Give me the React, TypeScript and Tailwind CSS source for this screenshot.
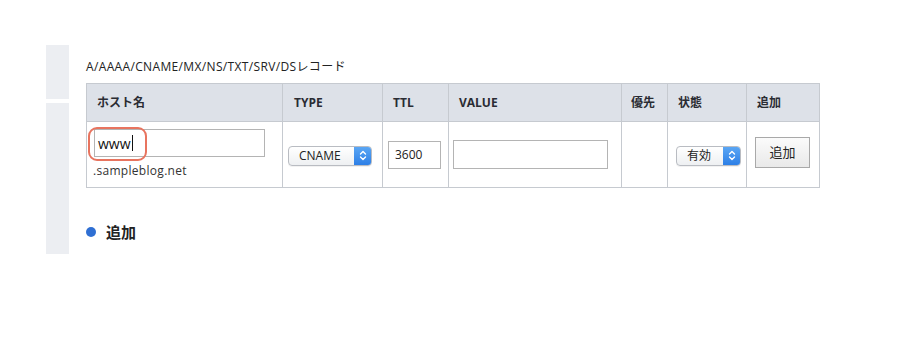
import React from 'react';

const FONT = { fontFamily: '"Open Sans", "Noto Sans CJK JP", sans-serif' };

function FakeSelect({ label, width }: { label: string; width: string }) {
  return (
    <div
      className={`${width} h-[20px] flex items-stretch rounded-[4px] border border-[#b9bcc2] bg-gradient-to-b from-white to-[#eef0f2] overflow-hidden shadow-[0_1px_0_rgba(0,0,0,0.05)]`}
    >
      <div className="flex-1 flex items-center pl-[10px] text-[12px] text-[#222]">{label}</div>
      <div className="w-[17px] flex items-center justify-center bg-gradient-to-b from-[#5aa6f4] to-[#2d7fe6]">
        <svg width="8" height="11" viewBox="0 0 8 11" fill="none" stroke="white" strokeWidth="1.4" strokeLinecap="round" strokeLinejoin="round">
          <path d="M1.5 4 L4 1.5 L6.5 4" />
          <path d="M1.5 7 L4 9.5 L6.5 7" />
        </svg>
      </div>
    </div>
  );
}

const HEADERS = [
  { label: 'ホスト名', w: 'w-[196px]', pl: 'pl-[10px]' },
  { label: 'TYPE', w: 'w-[100px]', pl: 'pl-[11px]' },
  { label: 'TTL', w: 'w-[66px]', pl: 'pl-[10px]' },
  { label: 'VALUE', w: 'w-[173px]', pl: 'pl-[10px]' },
  { label: '優先', w: 'w-[46px]', pl: 'pl-[9px]' },
  { label: '状態', w: 'w-[79px]', pl: 'pl-[10px]' },
  { label: '追加', w: 'w-[73px]', pl: 'pl-[10px]' },
];

export default function App() {
  return (
    <div className="w-[917px] h-[344px] bg-white text-[#222] flex pt-[45px] pl-[46px]" style={FONT}>
      {/* side strip */}
      <div className="w-[23px] flex flex-col gap-[4px]">
        <div className="h-[54px] bg-[#eceef2]" />
        <div className="h-[151px] bg-[#eceef2]" />
      </div>

      <div className="ml-[17px] flex flex-col">
        <p className="mt-[14px] text-[12px] leading-[16px] tracking-[0.35px] text-[#222]">A/AAAA/CNAME/MX/NS/TXT/SRV/DSレコード</p>

        <table className="mt-[8px] w-[733px] table-fixed border-collapse border border-[#c6cad0]">
          <thead>
            <tr className="h-[38px] bg-[#dde1e8]">
              {HEADERS.map(h => (
                <th
                  key={h.label}
                  className={`${h.w} ${h.pl} border border-[#c6cad0] text-left text-[12px] font-bold text-[#2a2c33]`}
                >
                  {h.label}
                </th>
              ))}
            </tr>
          </thead>
          <tbody>
            <tr className="h-[66px]">
              <td className="border border-[#c6cad0] align-top pt-[7px] pl-[7px]">
                <div className="relative">
                  <div className="w-[171px] h-[28px] border border-[#b4b4b4] bg-white flex items-center pl-[3px] text-[14px] text-[#111]">
                    www<span className="inline-block w-[1px] h-[16px] bg-[#111] ml-[1px]" />
                  </div>
                  <div className="absolute left-[-6px] top-[-2px] w-[59px] h-[34px] rounded-[9px] border-2 border-[#e8745f]" />
                </div>
                <p className="mt-[6px] -ml-[1px] text-[12px] leading-[16px] tracking-[0.3px] text-[#333]">.sampleblog.net</p>
              </td>
              <td className="border border-[#c6cad0] pl-[5px] pt-[2px]">
                <FakeSelect label="CNAME" width="w-[84px]" />
              </td>
              <td className="border border-[#c6cad0] pl-[5px]">
                <div className="w-[53px] h-[28px] border border-[#b4b4b4] bg-white flex items-center pl-[6px] text-[12px] text-[#222]">
                  3600
                </div>
              </td>
              <td className="border border-[#c6cad0] pl-[4px]">
                <div className="w-[155px] h-[29px] border border-[#b4b4b4] bg-white" />
              </td>
              <td className="border border-[#c6cad0]" />
              <td className="border border-[#c6cad0] pl-[8px] pt-[2px]">
                <FakeSelect label="有効" width="w-[65px]" />
              </td>
              <td className="border border-[#c6cad0] pl-[8px]">
                <button className="w-[55px] h-[31px] mb-[4px] border border-[#a9a9a9] bg-gradient-to-b from-[#fbfbfb] to-[#e9e9e9] text-[13px] text-[#222]">
                  追加
                </button>
              </td>
            </tr>
          </tbody>
        </table>

        <div className="mt-[33px] flex items-center gap-[10px]">
          <span className="w-[10px] h-[10px] rounded-full bg-[#2f6fd3]" />
          <span className="text-[15px] font-bold text-[#222]">追加</span>
        </div>
      </div>
    </div>
  );
}
